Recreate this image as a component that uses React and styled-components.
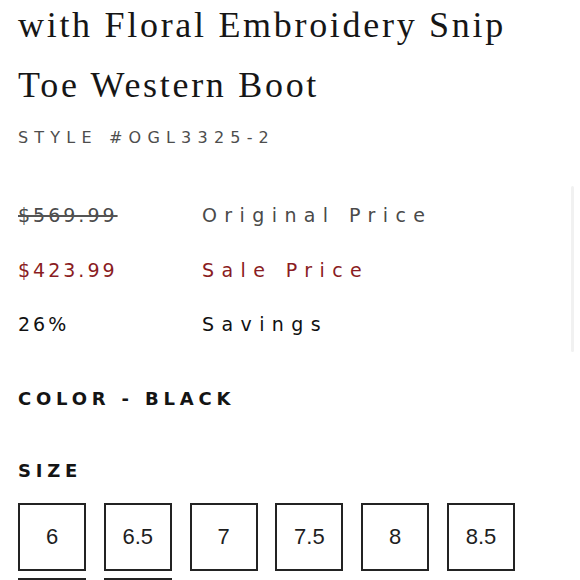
import React from "react";
import styled, { createGlobalStyle } from "styled-components";

const Global = createGlobalStyle`
  html, body { margin: 0; padding: 0; background: #ffffff; }
  body { overflow: hidden; }
`;

const Page = styled.div`
  position: relative;
  width: 580px;
  height: 580px;
  overflow: hidden;
  padding: 0 18px;
  box-sizing: border-box;
`;

const Title = styled.h1`
  margin: -5px 0 0;
  font-family: "Liberation Serif", serif;
  font-weight: 400;
  font-size: 36px;
  line-height: 60px;
  letter-spacing: 2.7px;
  color: #161616;
`;

const StyleCode = styled.div`
  margin-top: 13px;
  font-family: "DejaVu Sans", sans-serif;
  font-size: 16px;
  line-height: 20px;
  letter-spacing: 6.2px;
  color: #4d4d4d;
`;

const PriceGrid = styled.div`
  margin-top: 55px;
  display: grid;
  grid-template-columns: 184px 1fr;
  row-gap: 30.5px;
  font-family: "DejaVu Sans", sans-serif;
  font-size: 19px;
  line-height: 24px;
`;

const tones = {
  original: "#4a4a4a",
  sale: "#8a1c22",
  savings: "#111111",
};

const Value = styled.span`
  color: ${(p) => tones[p.$tone]};
  letter-spacing: 3px;
  ${(p) =>
    p.$struck &&
    `text-decoration: line-through; text-decoration-thickness: 2px; text-decoration-color: #555;`}
`;

const Label = styled.span`
  color: ${(p) => tones[p.$tone]};
  letter-spacing: 7.4px;
`;

const Heading = styled.div`
  margin-top: ${(p) => p.$mt}px;
  font-family: "DejaVu Sans", sans-serif;
  font-weight: 700;
  font-size: 18px;
  line-height: 24px;
  letter-spacing: 4.8px;
  color: #141414;
`;

const SizeGrid = styled.div`
  margin-top: 20px;
  display: grid;
  grid-template-columns: repeat(6, 68px);
  column-gap: 17.8px;
  row-gap: 7px;
`;

const SizeBox = styled.button`
  width: 68px;
  height: 68px;
  box-sizing: border-box;
  border: 2px solid #232323;
  background: #fff;
  padding: 0;
  display: flex;
  align-items: center;
  justify-content: center;
  font-family: "Liberation Sans", Arial, sans-serif;
  font-size: 22px;
  color: #1e1e1e;
`;

const ScrollThumb = styled.div`
  position: absolute;
  left: 571px;
  top: 186px;
  width: 3px;
  height: 166px;
  border-radius: 2px;
  background: #f1f1f1;
`;

const prices = [
  { value: "$569.99", label: "Original Price", tone: "original", struck: true },
  { value: "$423.99", label: "Sale Price", tone: "sale" },
  { value: "26%", label: "Savings", tone: "savings" },
];

const sizes = ["6", "6.5", "7", "7.5", "8", "8.5", "9", "9.5"];

export default function App() {
  return (
    <Page>
      <Global />
      <Title>
        with Floral Embroidery Snip
        <br />
        Toe Western Boot
      </Title>
      <StyleCode>STYLE #OGL3325-2</StyleCode>
      <PriceGrid>
        {prices.map((p) => (
          <React.Fragment key={p.label}>
            <Value $tone={p.tone} $struck={p.struck}>
              {p.value}
            </Value>
            <Label $tone={p.tone}>{p.label}</Label>
          </React.Fragment>
        ))}
      </PriceGrid>
      <Heading $mt={51}>COLOR - BLACK</Heading>
      <Heading $mt={48}>SIZE</Heading>
      <SizeGrid>
        {sizes.map((s) => (
          <SizeBox key={s}>{s}</SizeBox>
        ))}
      </SizeGrid>
      <ScrollThumb />
    </Page>
  );
}
